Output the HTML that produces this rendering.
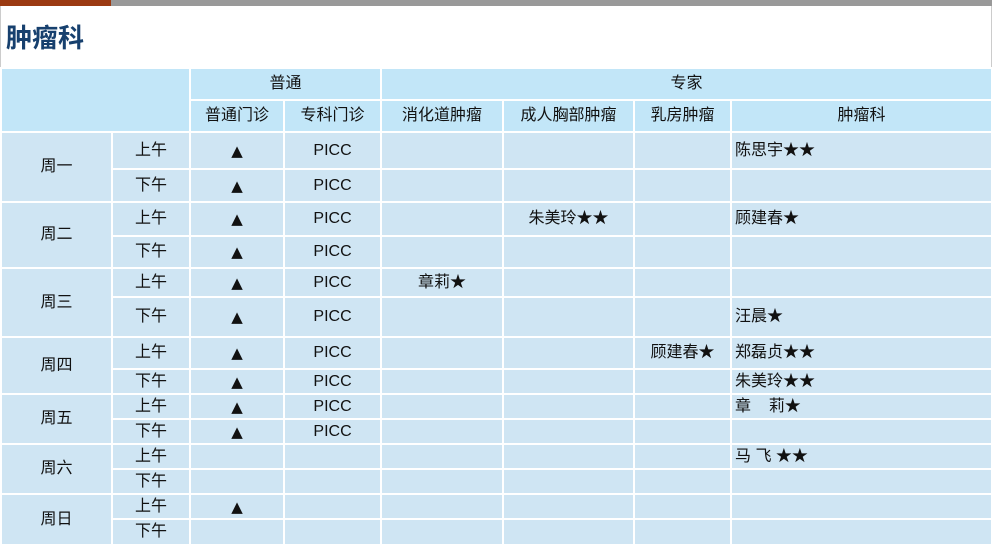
<!DOCTYPE html>
<html><head><meta charset="utf-8"><style>
body{margin:0;width:992px;height:544px;overflow:hidden;background:#fff;font-family:"Liberation Sans","Noto Sans CJK SC",sans-serif;}
.bar{position:absolute;left:0;top:0;height:6px;width:992px;background:#999;}
.bar i{position:absolute;left:0;top:0;height:6px;width:111px;background:#9b3a12;}
h1{position:absolute;left:6px;top:20px;margin:0;font-size:26px;line-height:34px;font-weight:bold;color:#17406e;font-family:"Noto Sans CJK SC",sans-serif;}
.frame{position:absolute;left:0;top:6px;width:990px;height:538px;border-left:1px solid #ccc;border-right:1px solid #ccc;}
table{position:absolute;left:0;top:67px;border-collapse:collapse;table-layout:fixed;width:991px;font-size:16px;line-height:16px;color:#111;}
td{border:2px solid #fff;background:#cfe5f3;text-align:center;padding:0;white-space:nowrap;vertical-align:middle;overflow:hidden;}
tr.h td{background:#c2e6f8;}
td.l{text-align:left;padding-left:3px;}
.t{font-family:"DejaVu Sans",sans-serif;font-size:15px;}
</style></head><body>
<div class="bar"><i></i></div>
<div class="frame"></div>
<h1>肿瘤科</h1>
<table>
<colgroup><col style="width:111px"><col style="width:78px"><col style="width:94px"><col style="width:97px"><col style="width:122px"><col style="width:131px"><col style="width:97px"><col style="width:261px"></colgroup>
<tr class="h" style="height:32px"><td colspan="2" rowspan="2"></td><td colspan="2">普通</td><td colspan="4">专家</td></tr>
<tr class="h" style="height:32px"><td>普通门诊</td><td>专科门诊</td><td>消化道肿瘤</td><td>成人胸部肿瘤</td><td>乳房肿瘤</td><td>肿瘤科</td></tr>
<tr style="height:37px"><td rowspan="2">周一</td><td>上午</td><td class="t">▲</td><td>PICC</td><td></td><td></td><td></td><td class="l">陈思宇★★</td></tr>
<tr style="height:33px"><td>下午</td><td class="t">▲</td><td>PICC</td><td></td><td></td><td></td><td></td></tr>
<tr style="height:34px"><td rowspan="2">周二</td><td>上午</td><td class="t">▲</td><td>PICC</td><td></td><td>朱美玲★★</td><td></td><td class="l">顾建春★</td></tr>
<tr style="height:32px"><td>下午</td><td class="t">▲</td><td>PICC</td><td></td><td></td><td></td><td></td></tr>
<tr style="height:29px"><td rowspan="2">周三</td><td>上午</td><td class="t">▲</td><td>PICC</td><td>章莉★</td><td></td><td></td><td></td></tr>
<tr style="height:40px"><td>下午</td><td class="t">▲</td><td>PICC</td><td></td><td></td><td></td><td class="l">汪晨★</td></tr>
<tr style="height:32px"><td rowspan="2">周四</td><td>上午</td><td class="t">▲</td><td>PICC</td><td></td><td></td><td>顾建春★</td><td class="l">郑磊贞★★</td></tr>
<tr style="height:25px"><td>下午</td><td class="t">▲</td><td>PICC</td><td></td><td></td><td></td><td class="l">朱美玲★★</td></tr>
<tr style="height:25px"><td rowspan="2">周五</td><td>上午</td><td class="t">▲</td><td>PICC</td><td></td><td></td><td></td><td class="l">章&nbsp;&nbsp;&nbsp;&nbsp;莉★</td></tr>
<tr style="height:25px"><td>下午</td><td class="t">▲</td><td>PICC</td><td></td><td></td><td></td><td></td></tr>
<tr style="height:25px"><td rowspan="2">周六</td><td>上午</td><td></td><td></td><td></td><td></td><td></td><td class="l">马 飞 ★★</td></tr>
<tr style="height:25px"><td>下午</td><td></td><td></td><td></td><td></td><td></td><td></td></tr>
<tr style="height:25px"><td rowspan="2">周日</td><td>上午</td><td class="t">▲</td><td></td><td></td><td></td><td></td><td></td></tr>
<tr style="height:26px"><td>下午</td><td></td><td></td><td></td><td></td><td></td><td></td></tr>
</table>
</body></html>
